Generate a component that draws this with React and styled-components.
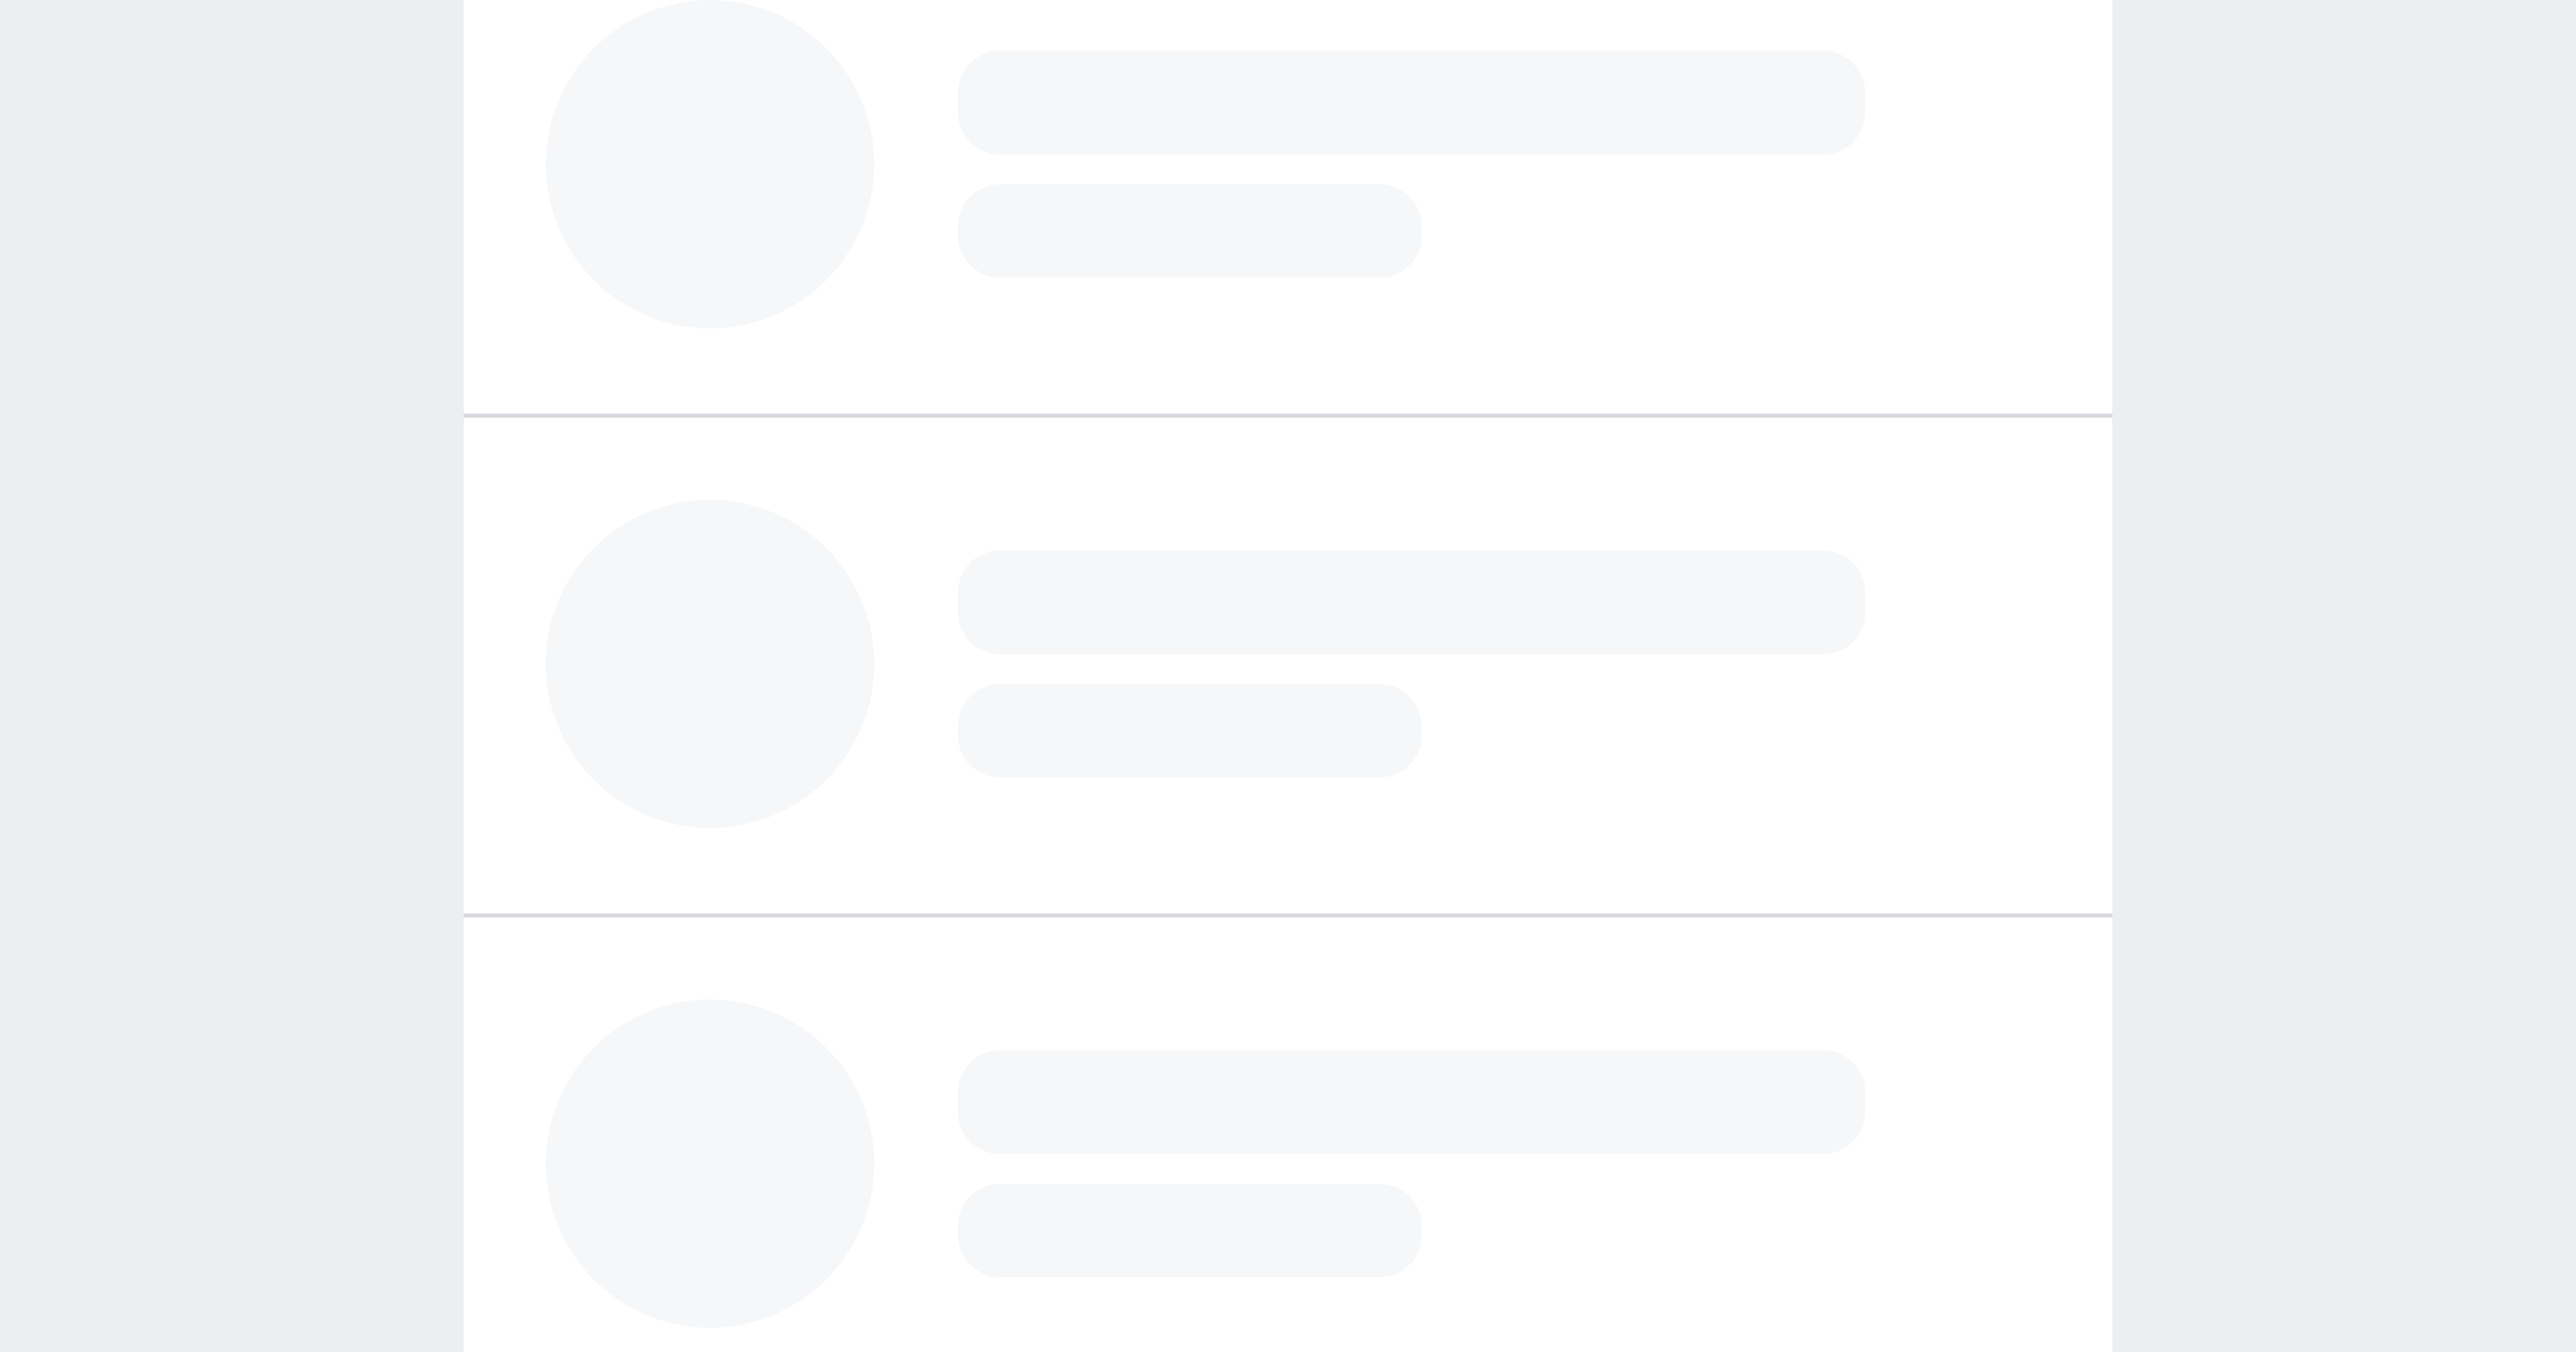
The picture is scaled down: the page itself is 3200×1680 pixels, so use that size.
import React from "react";
import styled, { createGlobalStyle } from "styled-components";

const GlobalStyle = createGlobalStyle`
  html, body {
    margin: 0;
    padding: 0;
    background: #edeef0;
    font-family: "Inter", "Liberation Sans", sans-serif;
    overflow: hidden;
  }
`;

const Page = styled.div`
  display: flex;
  justify-content: center;
  min-height: 1680px;
`;

const Feed = styled.div`
  width: 2048px;
  background: #ffffff;
  display: flex;
  flex-direction: column;
`;

const Item = styled.div`
  display: flex;
  align-items: center;
  gap: 104px;
  padding: 102px 102px 106px;
  border-bottom: 5px solid #d9dadf;

  &:first-child {
    padding-top: 0;
  }
`;

const Avatar = styled.div`
  flex: none;
  width: 408px;
  height: 408px;
  border-radius: 50%;
  background: #f6f7f9;
`;

const Lines = styled.div`
  display: flex;
  flex-direction: column;
  gap: 37px;
`;

const Line = styled.div`
  width: ${(p) => p.$w}px;
  height: ${(p) => p.$h}px;
  border-radius: 52px;
  background: #f6f7f9;
`;

const rows = [0, 1, 2];

export default function App() {
  return (
    <>
      <GlobalStyle />
      <Page>
        <Feed>
          {rows.map((r) => (
            <Item key={r}>
              <Avatar />
              <Lines>
                <Line $w={1127} $h={129} />
                <Line $w={576} $h={116} />
              </Lines>
            </Item>
          ))}
        </Feed>
      </Page>
    </>
  );
}
